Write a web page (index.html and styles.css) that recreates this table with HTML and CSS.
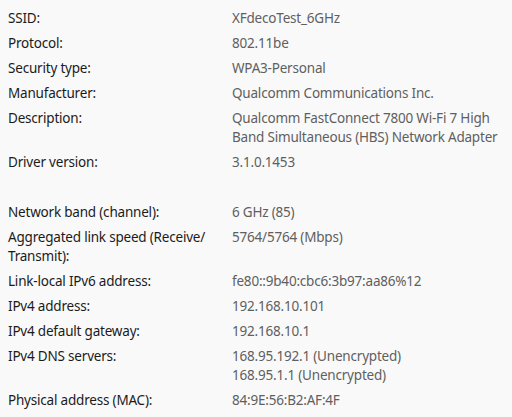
FILE: index.html
```html
<!DOCTYPE html>
<html lang="en">
<head>
<meta charset="utf-8">
<link rel="stylesheet" href="styles.css">
</head>
<body>
<dl class="props">
  <dt>SSID:</dt><dd>XFdecoTest_6GHz</dd>
  <dt>Protocol:</dt><dd>802.11be</dd>
  <dt>Security type:</dt><dd>WPA3-Personal</dd>
  <dt>Manufacturer:</dt><dd>Qualcomm Communications Inc.</dd>
  <dt>Description:</dt><dd>Qualcomm FastConnect 7800 Wi-Fi 7 High<br>Band Simultaneous (HBS) Network Adapter</dd>
  <dt>Driver version:</dt><dd>3.1.0.1453</dd>
  <dt class="spacer"></dt><dd class="spacer"></dd>
  <dt>Network band (channel):</dt><dd>6 GHz (85)</dd>
  <dt>Aggregated link speed (Receive/<br>Transmit):</dt><dd>5764/5764 (Mbps)</dd>
  <dt>Link-local IPv6 address:</dt><dd>fe80::9b40:cbc6:3b97:aa86%12</dd>
  <dt>IPv4 address:</dt><dd>192.168.10.101</dd>
  <dt>IPv4 default gateway:</dt><dd>192.168.10.1</dd>
  <dt>IPv4 DNS servers:</dt><dd>168.95.192.1 (Unencrypted)<br>168.95.1.1 (Unencrypted)</dd>
  <dt>Physical address (MAC):</dt><dd>84:9E:56:B2:AF:4F</dd>
</dl>
</body>
</html>
```
FILE: styles.css
```css
html, body {
  margin: 0;
  background: #f9f9f9;
}
body {
  padding: 9px 8px 0 8px;
  font-family: "Noto Sans", "Open Sans", sans-serif;
  font-size: 13.5px;
  letter-spacing: -0.2px;
  line-height: 19px;
}
.props {
  margin: 0;
  display: grid;
  grid-template-columns: 224px 1fr;
  row-gap: 6px;
}
.props dt {
  color: #1b1b1b;
  white-space: nowrap;
}
.props dd {
  margin: 0;
  color: #5f5f5f;
  white-space: nowrap;
}
.spacer {
  height: 19px;
}
```
